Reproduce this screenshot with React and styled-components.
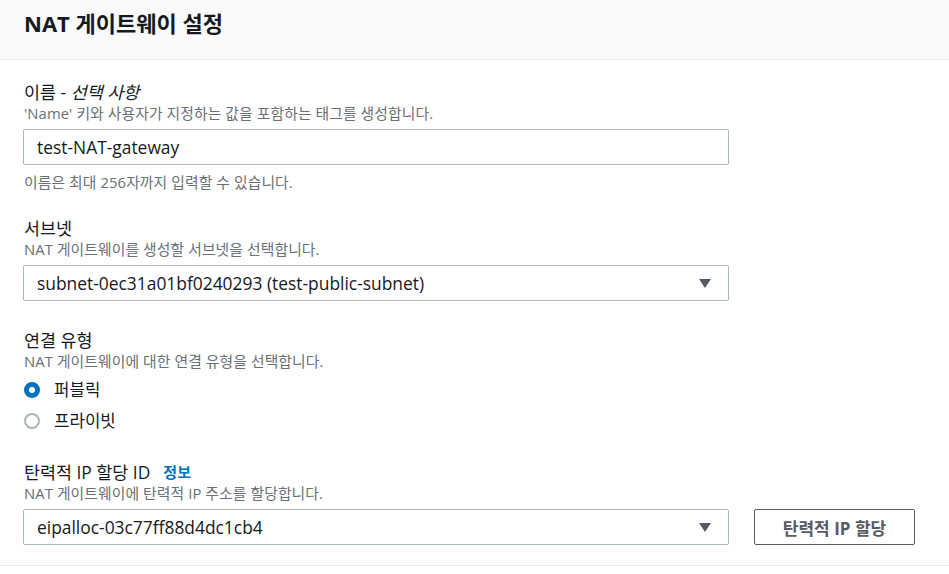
import React from 'react'
import styled, { createGlobalStyle } from 'styled-components'

const colors = {
    text: '#16191f',
    sub: '#687078',
    border: '#aab7b8',
    divider: '#eaeded',
    blue: '#0073bb',
    grey: '#545b64',
}

const GlobalStyle = createGlobalStyle`
    body {
        margin: 0;
        background: #ffffff;
        font-family: "Open Sans", "Noto Sans CJK KR", sans-serif;
        color: ${colors.text};
    }
`

const StPanel = styled.section`
    width: 949px;
    border-bottom: 1px solid ${colors.divider};
`

const StHeader = styled.header`
    height: 59px;
    display: flex;
    align-items: center;
    padding: 0 24px;
    background: #fafafa;
    border-bottom: 1px solid ${colors.divider};
`

const StTitle = styled.h2`
    margin: 0 0 14px;
    font-size: 22px;
    line-height: 28px;
    font-weight: 700;
`

const StBody = styled.div`
    display: flex;
    flex-direction: column;
    padding: 21px 24px 20px 23px;
`

const StField = styled.div`
    display: flex;
    flex-direction: column;
    margin-top: ${(p) => p.$space || 0}px;
`

const StLabel = styled.div`
    display: flex;
    align-items: center;
    gap: 13px;
    padding-left: 1px;
    font-size: 17.4px;
    line-height: 22px;

    em {
        font-style: italic;
    }
`

const StInfo = styled.span`
    color: ${colors.blue};
    font-size: 15px;
    font-weight: 700;
`

const StDesc = styled.div`
    padding-left: 1px;
    color: ${colors.sub};
    font-size: 14.8px;
    line-height: 20px;
    letter-spacing: 0.1px;
`

const StHint = styled(StDesc)`
    margin-top: 7px;
`

const StRow = styled.div`
    display: flex;
    align-items: center;
    gap: 25px;
    margin-top: 6px;
`

const StControl = styled.div`
    width: 706px;
    height: 36px;
    box-sizing: border-box;
    display: flex;
    align-items: center;
    justify-content: space-between;
    padding: 0 17px 0 13px;
    border: 1px solid ${colors.border};
    border-radius: 2px;
    font-size: 17.4px;
    background: #fff;
`

const StArrow = styled.span`
    width: 0;
    height: 0;
    border-left: 6px solid transparent;
    border-right: 6px solid transparent;
    border-top: 9px solid ${colors.grey};
`

const StButton = styled.button`
    width: 161px;
    height: 36px;
    border: 1px solid ${colors.grey};
    border-radius: 2px;
    background: #fff;
    color: ${colors.grey};
    font-family: inherit;
    font-size: 17px;
    font-weight: 700;
`

const StRadioList = styled.div`
    display: flex;
    flex-direction: column;
    gap: 9px;
    margin-top: 8px;
`

const StRadio = styled.label`
    display: flex;
    align-items: center;
    gap: 14px;
    padding-left: 1px;
    font-size: 16.8px;
    line-height: 22px;
`

const StDot = styled.span`
    width: 16px;
    height: 16px;
    box-sizing: border-box;
    border-radius: 50%;
    border: ${(p) => (p.$checked ? `5px solid ${colors.blue}` : `2px solid ${colors.border}`)};
    background: #fff;
`

const App = () => {
    return (
        <>
            <GlobalStyle />
            <StPanel>
                <StHeader>
                    <StTitle>NAT 게이트웨이 설정</StTitle>
                </StHeader>
                <StBody>
                    <StField>
                        <StLabel><span>이름 - <em>선택 사항</em></span></StLabel>
                        <StDesc>'Name' 키와 사용자가 지정하는 값을 포함하는 태그를 생성합니다.</StDesc>
                        <StRow>
                            <StControl>test-NAT-gateway</StControl>
                        </StRow>
                        <StHint>이름은 최대 256자까지 입력할 수 있습니다.</StHint>
                    </StField>

                    <StField $space={25}>
                        <StLabel>서브넷</StLabel>
                        <StDesc>NAT 게이트웨이를 생성할 서브넷을 선택합니다.</StDesc>
                        <StRow>
                            <StControl>
                                subnet-0ec31a01bf0240293 (test-public-subnet)
                                <StArrow />
                            </StControl>
                        </StRow>
                    </StField>

                    <StField $space={28}>
                        <StLabel>연결 유형</StLabel>
                        <StDesc>NAT 게이트웨이에 대한 연결 유형을 선택합니다.</StDesc>
                        <StRadioList>
                            <StRadio><StDot $checked />퍼블릭</StRadio>
                            <StRadio><StDot />프라이빗</StRadio>
                        </StRadioList>
                    </StField>

                    <StField $space={29}>
                        <StLabel>탄력적 IP 할당 ID<StInfo>정보</StInfo></StLabel>
                        <StDesc>NAT 게이트웨이에 탄력적 IP 주소를 할당합니다.</StDesc>
                        <StRow>
                            <StControl>
                                eipalloc-03c77ff88d4dc1cb4
                                <StArrow />
                            </StControl>
                            <StButton>탄력적 IP 할당</StButton>
                        </StRow>
                    </StField>
                </StBody>
            </StPanel>
        </>
    )
}

export default App
